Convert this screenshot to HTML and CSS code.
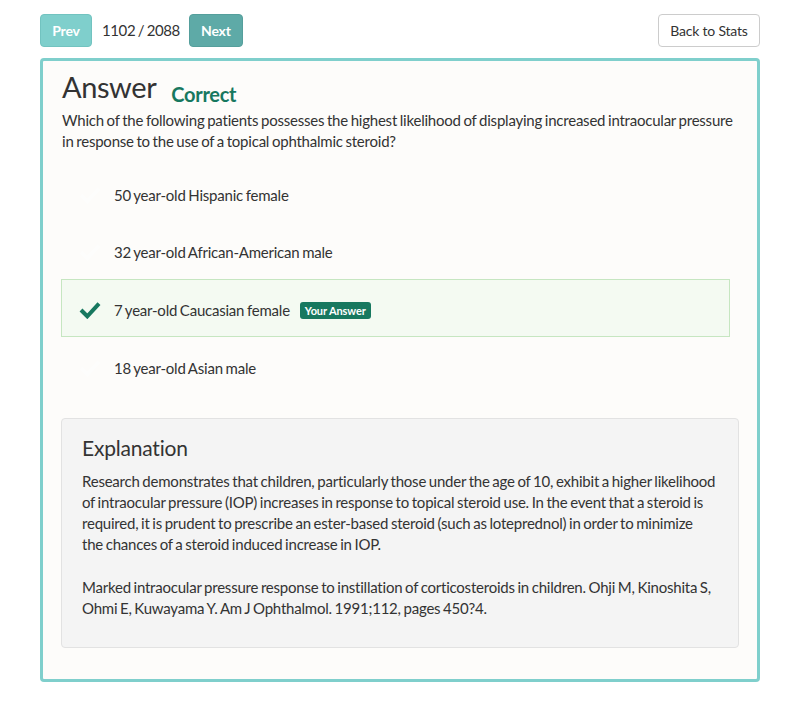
FILE: index.html
```html
<!DOCTYPE html>
<html>
<head>
<meta charset="utf-8">
<link rel="stylesheet" href="styles.css">
</head>
<body>
<div class="page">
  <div class="toolbar">
    <div class="nav">
      <button class="btn btn-prev">Prev</button>
      <span class="counter">1102 / 2088</span>
      <button class="btn btn-next">Next</button>
    </div>
    <button class="btn btn-back">Back to Stats</button>
  </div>
  <div class="card">
    <div class="title-row">
      <h1 class="title">Answer</h1>
      <span class="status">Correct</span>
    </div>
    <p class="question">Which of the following patients possesses the highest likelihood of displaying increased intraocular pressure in response to the use of a topical ophthalmic steroid?</p>
    <div class="options">
      <div class="option">
        <svg class="check check-hidden" viewBox="0 0 24 20"><path d="M2 10 L9 17 L22 3" /></svg>
        <span>50 year-old Hispanic female</span>
      </div>
      <div class="option">
        <svg class="check check-hidden" viewBox="0 0 24 20"><path d="M2 10 L9 17 L22 3" /></svg>
        <span>32 year-old African-American male</span>
      </div>
      <div class="option option-selected">
        <svg class="check" viewBox="0 0 24 20"><path d="M2 10 L9 17 L22 3" /></svg>
        <span>7 year-old Caucasian female</span>
        <span class="badge">Your Answer</span>
      </div>
      <div class="option">
        <svg class="check check-hidden" viewBox="0 0 24 20"><path d="M2 10 L9 17 L22 3" /></svg>
        <span>18 year-old Asian male</span>
      </div>
    </div>
    <div class="explanation">
      <h2 class="exp-title">Explanation</h2>
      <p class="exp-text">Research demonstrates that children, particularly those under the age of 10, exhibit a higher likelihood of intraocular pressure (IOP) increases in response to topical steroid use. In the event that a steroid is required, it is prudent to prescribe an ester-based steroid (such as loteprednol) in order to minimize<br>the chances of a steroid induced increase in IOP.</p>
      <p class="exp-text">Marked intraocular pressure response to instillation of corticosteroids in children. Ohji M, Kinoshita S, Ohmi E, Kuwayama Y. Am J Ophthalmol. 1991;112, pages 450?4.</p>
    </div>
  </div>
</div>
</body>
</html>
```

FILE: styles.css
```css
* { box-sizing: border-box; }
html, body {
  margin: 0;
  padding: 0;
  background: #ffffff;
}
body {
  font-family: Lato, "Open Sans", sans-serif;
  color: #333333;
  font-size: 15px;
  letter-spacing: -0.22px;
  word-spacing: -0.9px;
}
.page {
  padding: 14px 40px 24px 40px;
}
.toolbar {
  display: flex;
  justify-content: space-between;
  align-items: center;
  height: 33px;
}
.nav {
  display: flex;
  align-items: center;
}
.btn {
  font-family: inherit;
  letter-spacing: -0.2px;
  height: 33px;
  border-radius: 4px;
  font-size: 14px;
  padding: 0 12px;
  cursor: pointer;
}
.btn-prev {
  background: #7fcfcc;
  border: 1px solid #72c3c0;
  color: #ffffff;
  font-weight: 700;
  width: 52px;
  padding: 0;
}
.btn-next {
  background: #5eaaa7;
  border: 1px solid #559f9c;
  color: #ffffff;
  font-weight: 700;
  width: 54px;
  padding: 0;
}
.counter {
  font-size: 15px;
  letter-spacing: -0.4px;
  margin: 0 9px 0 10px;
  color: #333;
  position: relative;
  top: -1px;
}
.btn-back {
  background: #ffffff;
  border: 1px solid #cccccc;
  color: #333;
  width: 102px;
  padding: 0;
}
.card {
  margin-top: 11px;
  border: 3px solid #7fcfcc;
  border-radius: 4px;
  background: #fdfcfa;
  padding: 6px 18px 32px 18px;
  height: 624px;
}
.title-row {
  display: flex;
  align-items: baseline;
  padding-left: 1px;
}
.title {
  font-size: 29px;
  letter-spacing: -0.4px;
  font-weight: 400;
  margin: 0;
  line-height: 40px;
  color: #333;
}
.status {
  font-size: 20px;
  letter-spacing: -0.3px;
  font-weight: 700;
  color: #17785f;
  margin-left: 15px;
  position: relative;
  top: 4px;
}
.question {
  margin: 3px 0 0 0;
  line-height: 21px;
  padding-left: 1px;
}
.options {
  margin-top: 12px;
  width: 669px;
}
.option {
  display: flex;
  align-items: center;
  height: 57.5px;
  padding-left: 17px;
  padding-top: 4px;
  border: 1px solid transparent;
}
.option-selected {
  background: #f4faf2;
  border-color: #c6e6c1;
  height: 58px;
}
.check {
  width: 22px;
  height: 18px;
  margin-right: 13px;
  fill: none;
  stroke: #17785f;
  stroke-width: 4.5;
  stroke-linecap: butt;
  stroke-linejoin: miter;
}
.check-hidden {
  stroke: #ffffff;
  opacity: 0.4;
}
.badge {
  margin-left: 10px;
  background: #17785f;
  color: #fff;
  font-size: 11px;
  letter-spacing: -0.1px;
  word-spacing: 0;
  font-weight: 700;
  padding: 2px 5px;
  border-radius: 3px;
}
.explanation {
  margin-top: 23px;
  background: #f4f4f4;
  border: 1px solid #e2e2e2;
  border-radius: 4px;
  padding: 16px 20px 28px 20px;
  height: 230px;
}
.exp-title {
  font-size: 21px;
  letter-spacing: -0.2px;
  font-weight: 400;
  margin: 0 0 10px 0;
  line-height: 26px;
}
.exp-text {
  margin: 0 0 22px 0;
  line-height: 21px;
}
```
